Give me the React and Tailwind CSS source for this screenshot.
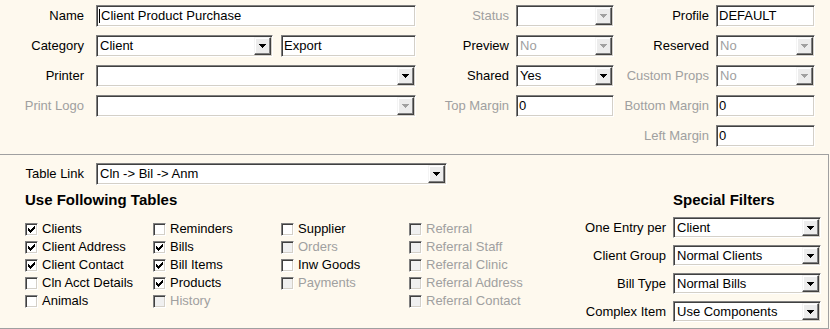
import React from 'react';

const sunken =
  'border border-t-[#808080] border-l-[#808080] border-b-white border-r-white shadow-[inset_1px_1px_0_#404040,inset_-1px_-1px_0_#d4d0c8] bg-white';

const TextInput = ({ value = '', disabled, caret, className = '' }) => (
  <div className={`${sunken} h-[22px] flex items-center pl-[2px] ${className}`}>
    {caret && <span className="w-px h-[14px] bg-black mr-[1px]" />}
    <span className={disabled ? 'text-[#a0a0a0]' : 'text-black'}>{value}</span>
  </div>
);

const Arrow = ({ disabled }) => (
  <svg width="7" height="4" viewBox="0 0 7 4" shapeRendering="crispEdges">
    <polygon points="0,0 7,0 3.5,4" fill={disabled ? '#a0a0a0' : '#000'} />
  </svg>
);

const Select = ({ value = '', disabled, className = '', h = 'h-[22px]' }) => (
  <div className={`${sunken} ${h} flex items-stretch p-[1px] ${className}`}>
    <span className={`flex-1 flex items-center pl-[2px] ${disabled ? 'text-[#a0a0a0]' : 'text-black'}`}>{value}</span>
    <span className="w-[17px] flex items-center justify-center bg-[#ececec] border border-t-[#f4f4f4] border-l-[#f4f4f4] border-r-[#404040] border-b-[#404040] shadow-[inset_-1px_-1px_0_#808080,inset_1px_1px_0_white]">
      <Arrow disabled={disabled} />
    </span>
  </div>
);

const Label = ({ children, disabled, w }) => (
  <span className={`${w} text-right shrink-0 ${disabled ? 'text-[#a0a0a0]' : 'text-black'}`}>{children}</span>
);

const Checkbox = ({ label, checked, disabled }) => (
  <div className="h-[18px] flex items-center">
    <span
      className={`w-[13px] h-[13px] flex items-center justify-center border border-t-[#808080] border-l-[#808080] border-b-white border-r-white shadow-[inset_1px_1px_0_#404040,inset_-1px_-1px_0_#d4d0c8] ${
        disabled ? 'bg-[#f0f0f0]' : 'bg-white'
      }`}
    >
      {checked && (
        <svg width="7" height="7" viewBox="0 0 7 7" shapeRendering="crispEdges">
          <path d="M0 2h1v1h1v1h1V3h1V2h1V1h1V0h1v3H6v1H5v1H4v1H3v1H2V6H1V5H0z" fill="#000" />
        </svg>
      )}
    </span>
    <span className={`ml-[4px] ${disabled ? 'text-[#a0a0a0]' : 'text-black'}`}>{label}</span>
  </div>
);

const tableCols = [
  [
    ['Clients', true],
    ['Client Address', true],
    ['Client Contact', true],
    ['Cln Acct Details', false],
    ['Animals', false],
  ],
  [
    ['Reminders', false],
    ['Bills', true],
    ['Bill Items', true],
    ['Products', true],
    ['History', false, true],
  ],
  [
    ['Supplier', false],
    ['Orders', false, true],
    ['Inw Goods', false],
    ['Payments', false, true],
  ],
  [
    ['Referral', false, true],
    ['Referral Staff', false, true],
    ['Referral Clinic', false, true],
    ['Referral Address', false, true],
    ['Referral Contact', false, true],
  ],
];

const colWidths = ['w-[128px]', 'w-[128px]', 'w-[128px]', 'w-[140px]'];

const filters = [
  ['One Entry per', 'Client'],
  ['Client Group', 'Normal Clients'],
  ['Bill Type', 'Normal Bills'],
  ['Complex Item', 'Use Components'],
];

export default function App() {
  return (
    <div
      className="w-[830px] h-[329px] bg-[#fef9ee] text-[13px] leading-[16px] overflow-hidden"
      style={{ fontFamily: '"Liberation Sans", Arial, sans-serif' }}
    >
      {/* top section */}
      <div className="h-[154px] flex pt-[5px]">
        <div className="flex flex-col gap-[8px]">
          <div className="flex items-center h-[22px] gap-[12px]">
            <Label w="w-[84px]">Name</Label>
            <TextInput value="Client Product Purchase" caret className="w-[320px]" />
          </div>
          <div className="flex items-center h-[22px] gap-[12px]">
            <Label w="w-[84px]">Category</Label>
            <Select value="Client" className="w-[177px]" />
            <TextInput value="Export" className="w-[135px] ml-[-4px]" />
          </div>
          <div className="flex items-center h-[22px] gap-[12px]">
            <Label w="w-[84px]">Printer</Label>
            <Select className="w-[320px]" />
          </div>
          <div className="flex items-center h-[22px] gap-[12px]">
            <Label w="w-[84px]" disabled>Print Logo</Label>
            <Select disabled className="w-[320px]" />
          </div>
        </div>

        <div className="flex flex-col gap-[8px]">
          <div className="flex items-center h-[22px] gap-[7px]">
            <Label w="w-[93px]" disabled>Status</Label>
            <Select disabled className="w-[98px]" />
          </div>
          <div className="flex items-center h-[22px] gap-[7px]">
            <Label w="w-[93px]">Preview</Label>
            <Select value="No" disabled className="w-[98px]" />
          </div>
          <div className="flex items-center h-[22px] gap-[7px]">
            <Label w="w-[93px]">Shared</Label>
            <Select value="Yes" className="w-[98px]" />
          </div>
          <div className="flex items-center h-[22px] gap-[7px]">
            <Label w="w-[93px]" disabled>Top Margin</Label>
            <TextInput value="0" className="w-[98px]" />
          </div>
        </div>

        <div className="flex flex-col gap-[8px]">
          <div className="flex items-center h-[22px] gap-[7px]">
            <Label w="w-[95px]">Profile</Label>
            <TextInput value="DEFAULT" className="w-[99px]" />
          </div>
          <div className="flex items-center h-[22px] gap-[7px]">
            <Label w="w-[95px]">Reserved</Label>
            <Select value="No" disabled className="w-[99px]" />
          </div>
          <div className="flex items-center h-[22px] gap-[7px]">
            <Label w="w-[95px]" disabled>Custom Props</Label>
            <Select value="No" disabled className="w-[99px]" />
          </div>
          <div className="flex items-center h-[22px] gap-[7px]">
            <Label w="w-[95px]" disabled>Bottom Margin</Label>
            <TextInput value="0" className="w-[99px]" />
          </div>
          <div className="flex items-center h-[22px] gap-[7px]">
            <Label w="w-[95px]" disabled>Left Margin</Label>
            <TextInput value="0" className="w-[99px]" />
          </div>
        </div>
      </div>

      {/* bottom section */}
      <div className="w-[829px] h-[175px] border-t border-r border-b border-[#a0a0a0] pt-[8px]">
        <div className="flex items-center h-[22px] gap-[12px]">
          <Label w="w-[84px]">Table Link</Label>
          <Select value="Cln -> Bil -> Anm" className="w-[351px]" />
        </div>

        <div className="flex mt-[7px]">
          <div className="pl-[25px]">
            <div className="font-bold text-[15px] h-[16px]">Use Following Tables</div>
            <div className="flex mt-[12px]">
              {tableCols.map((col, i) => (
                <div key={i} className={`${colWidths[i]} flex flex-col`}>
                  {col.map(([label, checked, disabled]) => (
                    <Checkbox key={label} label={label} checked={checked} disabled={disabled} />
                  ))}
                </div>
              ))}
            </div>
          </div>

          <div className="ml-auto pr-[7px]">
            <div className="font-bold text-[15px] h-[16px] pl-[113px]">Special Filters</div>
            <div className="flex flex-col gap-[7px] mt-[9px]">
              {filters.map(([label, value]) => (
                <div key={label} className="flex items-center h-[21px] gap-[7px]">
                  <Label w="w-[106px]">{label}</Label>
                  <Select value={value} h="h-[21px]" className="w-[148px]" />
                </div>
              ))}
            </div>
          </div>
        </div>
      </div>
    </div>
  );
}
